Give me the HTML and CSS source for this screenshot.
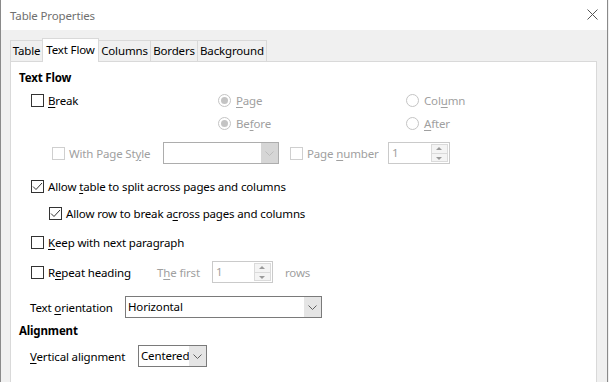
FILE: index.html
```html
<!DOCTYPE html>
<html>
<head>
<meta charset="utf-8">
<link rel="stylesheet" href="styles.css">
</head>
<body>
<div class="window">
  <div class="titlebar">
    <span class="title">Table Properties</span>
    <svg class="close" width="11" height="11" viewBox="0 0 11 11"><path d="M0.5 0.5 L10.5 10.5 M10.5 0.5 L0.5 10.5" stroke="#555" stroke-width="1" fill="none"/></svg>
  </div>
  <div class="content">
    <div class="tabs">
      <div class="tab w-table">Table</div>
      <div class="tab active w-flow">Text Flow</div>
      <div class="tab w-columns">Columns</div>
      <div class="tab w-borders">Borders</div>
      <div class="tab w-bg">Background</div>
    </div>
    <div class="panel">
      <div class="heading">Text Flow</div>

      <div class="break-grid">
        <div class="check"><span class="box"></span><span><u>B</u>reak</span></div>
        <div class="radio dis"><span class="dot on"></span><span><u>P</u>age</span></div>
        <div class="radio dis"><span class="dot"></span><span>Col<u>u</u>mn</span></div>
        <div></div>
        <div class="radio dis"><span class="dot on"></span><span>Be<u>f</u>ore</span></div>
        <div class="radio dis"><span class="dot"></span><span><u>A</u>fter</span></div>
      </div>

      <div class="row ctl pagestyle">
        <div class="check dis lbl-ps"><span class="box"></span><span>With Page St<u>y</u>le</span></div>
        <div class="combo dis w-ps"><span class="combo-text"></span><span class="combo-btn"><svg width="9" height="5" viewBox="0 0 9 5"><path d="M0.5 0.5 L4.5 4.5 L8.5 0.5" stroke="#bdbdbd" fill="none"/></svg></span></div>
        <div class="check dis lbl-pn"><span class="box"></span><span>Page <u>n</u>umber</span></div>
        <div class="spin w-pn"><span class="spin-text">1</span><span class="spin-btns"><span class="up"></span><span class="down"></span></span></div>
      </div>

      <div class="row r-split">
        <div class="check"><span class="box checked"><svg width="11" height="11" viewBox="0 0 11 11"><path d="M1 5.5 L4 8.5 L10 2" stroke="#333" stroke-width="1" fill="none"/></svg></span><span>Allow <u>t</u>able to split across pages and columns</span></div>
      </div>

      <div class="row r-rowbreak">
        <div class="check"><span class="box checked"><svg width="11" height="11" viewBox="0 0 11 11"><path d="M1 5.5 L4 8.5 L10 2" stroke="#333" stroke-width="1" fill="none"/></svg></span><span>Allow row to break a<u>c</u>ross pages and columns</span></div>
      </div>

      <div class="row r-keep">
        <div class="check"><span class="box"></span><span><u>K</u>eep with next paragraph</span></div>
      </div>

      <div class="row ctl r-repeat">
        <div class="check lbl-rh"><span class="box"></span><span>R<u>e</u>peat heading</span></div>
        <div class="dis-text lbl-first">T<u>h</u>e first</div>
        <div class="spin w-first"><span class="spin-text">1</span><span class="spin-btns"><span class="up"></span><span class="down"></span></span></div>
        <div class="dis-text lbl-rows">rows</div>
      </div>

      <div class="row ctl r-orient">
        <div class="lbl-orient">Text <u>o</u>rientation</div>
        <div class="combo w-orient"><span class="combo-text">Horizontal</span><span class="combo-btn"><svg width="9" height="5" viewBox="0 0 9 5"><path d="M0.5 0.5 L4.5 4.5 L8.5 0.5" stroke="#606060" fill="none"/></svg></span></div>
      </div>

      <div class="heading h-align">Alignment</div>

      <div class="row ctl r-valign">
        <div class="lbl-valign"><u>V</u>ertical alignment</div>
        <div class="combo w-valign"><span class="combo-text">Centered</span><span class="combo-btn"><svg width="9" height="5" viewBox="0 0 9 5"><path d="M0.5 0.5 L4.5 4.5 L8.5 0.5" stroke="#606060" fill="none"/></svg></span></div>
      </div>
    </div>
  </div>
</div>
</body>
</html>
```

FILE: styles.css
```css
html, body {
  margin: 0;
  padding: 0;
  background: #f0f0f0;
}
body {
  font-family: "Noto Sans", "Open Sans", sans-serif;
  font-size: 11.5px;
  letter-spacing: -0.15px;
  color: #000;
  overflow: hidden;
  height: 382px;
}
.window {
  box-sizing: border-box;
  width: 608px;
  height: 382px;
  border-left: 1px solid #8a8a8a;
  border-right: 1px solid #8a8a8a;
  background: #f0f0f0;
  overflow: hidden;
}
.titlebar {
  height: 30px;
  background: #fff;
  display: flex;
  align-items: center;
  justify-content: space-between;
  padding: 0 9px 0 9px;
}
.title {
  color: #6f6f6f;
  font-size: 11.5px;
}
.close {
  margin-top: -1px;
}
.content {
  padding-left: 9px;
  padding-top: 8px;
}
.tabs {
  display: flex;
  align-items: flex-end;
  height: 23px;
  position: relative;
  z-index: 1;
}
.tab {
  box-sizing: border-box;
  height: 21px;
  border: 1px solid #d9d9d9;
  border-bottom: none;
  border-left: none;
  background: #f0f0f0;
  text-align: center;
  line-height: 20px;
  white-space: nowrap;
}
.tab.w-table { border-left: 1px solid #d9d9d9; }
.tab.active {
  height: 24px;
  margin-bottom: -1px;
  background: #fff;
  line-height: 22px;
  border-left: 1px solid #d9d9d9;
  margin-left: -1px;
}
.w-table { width: 33px; }
.w-flow { width: 57px; }
.w-columns { width: 52px; }
.w-borders { width: 47px; }
.w-bg { width: 69px; }
.panel {
  box-sizing: border-box;
  width: 587px;
  height: 340px;
  background: #fff;
  border: 1px solid #d9d9d9;
  padding: 6px 0 0 8px;
  display: flex;
  flex-direction: column;
}
.heading {
  height: 20px;
  line-height: 20px;
  font-weight: bold;
}
.h-align { margin-top: 3px; }
.check, .radio {
  display: flex;
  align-items: center;
  white-space: nowrap;
}
.box {
  box-sizing: border-box;
  width: 13px;
  height: 13px;
  border: 1px solid #333;
  background: #fff;
  margin-right: 4px;
  display: flex;
  align-items: center;
  justify-content: center;
  flex: none;
}
.check.dis { color: #a0a0a0; }
.check.dis .box { border-color: #cfcfcf; }
.dot {
  box-sizing: border-box;
  width: 13px;
  height: 13px;
  border: 1px solid #c4c4c4;
  border-radius: 50%;
  background: #fff;
  margin-right: 5px;
  position: relative;
  flex: none;
}
.dot.on::after {
  content: "";
  position: absolute;
  left: 2px;
  top: 2px;
  width: 7px;
  height: 7px;
  border-radius: 50%;
  background: #c4c4c4;
}
.radio.dis { color: #a0a0a0; }
.break-grid {
  margin-top: 2px;
  padding-left: 12px;
  display: grid;
  grid-template-columns: 187px 188px 1fr;
  grid-template-rows: 20px 20px;
  row-gap: 3px;
}
.row {
  height: 20px;
  display: flex;
  align-items: center;
  padding-left: 12px;
}
.row.ctl { height: 22px; }
.pagestyle { margin-top: 9px; padding-left: 33px; }
.lbl-ps { width: 111px; }
.w-ps { width: 116px; }
.lbl-pn { width: 98px; margin-left: 11px; }
.w-pn { width: 62px; }
.r-split { margin-top: 12px; }
.r-rowbreak { margin-top: 7px; padding-left: 30px; }
.r-keep { margin-top: 9px; }
.r-repeat { margin-top: 9px; }
.lbl-rh { width: 126px; }
.dis-text { color: #a0a0a0; white-space: nowrap; }
.lbl-first { width: 55px; }
.w-first { width: 61px; }
.lbl-rows { margin-left: 12px; }
.r-orient { margin-top: 13px; padding-left: 11px; }
.lbl-orient { width: 95px; white-space: nowrap; }
.w-orient { width: 197px; }
.r-valign { margin-top: 4px; padding-left: 11px; }
.lbl-valign { width: 108px; white-space: nowrap; }
.w-valign { width: 69px; }
.combo {
  box-sizing: border-box;
  height: 22px;
  border: 1px solid #7a7a7a;
  background: #fff;
  display: flex;
  flex: none;
}
.combo.dis { border-color: #adadad; }
.combo-text {
  flex: 1;
  padding-left: 2px;
  line-height: 20px;
  white-space: nowrap;
  overflow: hidden;
}
.combo-btn {
  width: 17px;
  background: #e5e5e5;
  display: flex;
  align-items: center;
  justify-content: center;
}
.combo.dis .combo-btn { background: #d6d6d6; }
.spin {
  box-sizing: border-box;
  height: 22px;
  border: 1px solid #cacaca;
  background: #fff;
  display: flex;
  flex: none;
  padding: 1px;
}
.spin-text {
  flex: 1;
  color: #a0a0a0;
  padding-left: 2px;
  line-height: 18px;
}
.spin-btns {
  box-sizing: border-box;
  width: 17px;
  border: 1px solid #dadada;
  background: #f4f4f4;
  display: flex;
  flex-direction: column;
}
.spin-btns .up, .spin-btns .down {
  flex: 1;
  position: relative;
}
.spin-btns .up { border-bottom: 1px solid #dadada; }
.spin-btns .up::after, .spin-btns .down::after {
  content: "";
  position: absolute;
  left: 4px;
  width: 0;
  height: 0;
  border-left: 3px solid transparent;
  border-right: 3px solid transparent;
}
.spin-btns .up::after {
  top: 2px;
  border-bottom: 3px solid #9a9a9a;
}
.spin-btns .down::after {
  top: 3px;
  border-top: 3px solid #9a9a9a;
}
u { text-decoration: underline; text-underline-offset: 2px; }
```
